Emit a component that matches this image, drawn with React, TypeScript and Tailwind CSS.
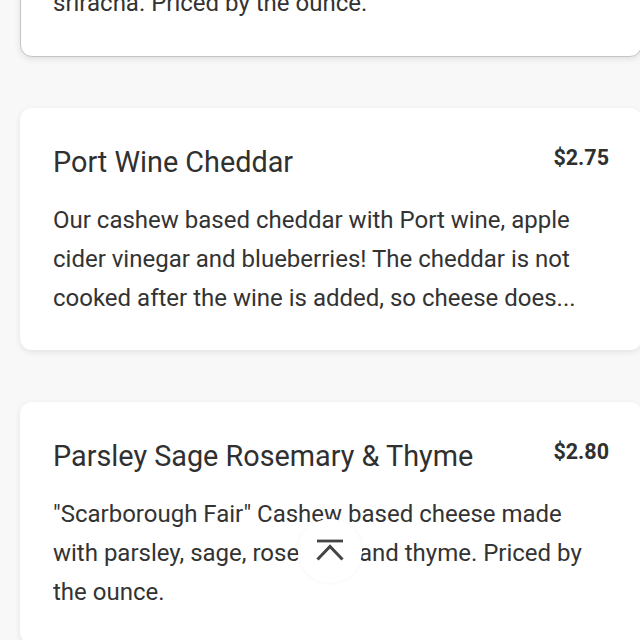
import React from 'react';

interface MenuItem {
  name: string;
  price: string;
  description: string;
}

const items: MenuItem[] = [
  {
    name: 'Port Wine Cheddar',
    price: '$2.75',
    description:
      'Our cashew based cheddar with Port wine, apple cider vinegar and blueberries! The cheddar is not cooked after the wine is added, so cheese does...',
  },
  {
    name: 'Parsley Sage Rosemary & Thyme',
    price: '$2.80',
    description:
      '"Scarborough Fair" Cashew based cheese made with parsley, sage, rosemary and thyme. Priced by the ounce.',
  },
];

const MenuCard: React.FC<{ item: MenuItem }> = ({ item }) => {
  return (
    <div className="ml-[20px] w-[622px] shrink-0 rounded-[12px] bg-white pl-[33px] pr-[33px] pt-[35px] pb-[32px] shadow-[0_2px_6px_rgba(0,0,0,0.09)]">
      <div className="flex items-start justify-between">
        <h3 className="text-[28.8px] leading-[39px] text-[#303030]">{item.name}</h3>
        <span className="text-[21.5px] leading-[30px] font-bold text-[#303030]">{item.price}</span>
      </div>
      <p className="mt-[19px] line-clamp-3 text-[24px] leading-[39px] text-[#333]">{item.description}</p>
    </div>
  );
};

export default function App() {
  return (
    <div
      className="relative h-[640px] w-[640px] overflow-hidden bg-[#f8f8f8]"
      style={{ fontFamily: 'Roboto, "Liberation Sans", sans-serif' }}
    >
      <div className="flex flex-col gap-[51px]">
        <div className="-mt-[51px] ml-[20px] w-[622px] rounded-[12px] border border-[#c4c4c4] bg-white pl-[32px] pr-[31px] pt-[34px] pb-[33px] shadow-[0_2px_6px_rgba(0,0,0,0.1)]">
          <p className="text-[24px] leading-[39px] text-[#333]">sriracha. Priced by the ounce.</p>
        </div>
        <div className="flex flex-col gap-[52px]">
          {items.map((item) => (
            <MenuCard key={item.name} item={item} />
          ))}
        </div>
      </div>

      <button className="fixed left-[298px] top-[519px] flex h-[64px] w-[64px] items-center justify-center rounded-full bg-white shadow-[0_0_4px_rgba(0,0,0,0.05)]">
        <svg width="30" height="30" viewBox="0 0 30 30" fill="none" stroke="#444">
          <path d="M2 5h26" strokeWidth="2.8" />
          <path d="M2.5 23.5l12.5-13 12.5 13" strokeWidth="3" />
        </svg>
      </button>
    </div>
  );
}
